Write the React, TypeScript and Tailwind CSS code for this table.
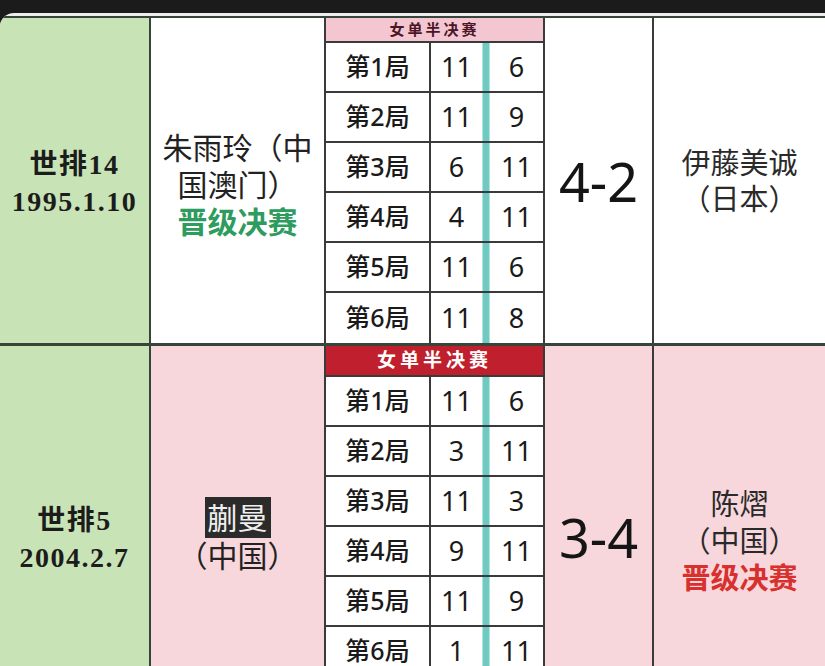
import React from 'react';

type Game = [string, string, string];

type Match = {
  rank: string;
  date: string;
  player: React.ReactNode;
  score: string;
  opponent: React.ReactNode;
  tone: 'white' | 'pink';
  header: 'light' | 'red';
  games: Game[];
};

const sans = 'font-["Noto_Sans","Noto_Sans_CJK_SC",sans-serif]';

const matches: Match[] = [
  {
    rank: '世排14',
    date: '1995.1.10',
    tone: 'white',
    header: 'light',
    score: '4-2',
    player: (
      <div className="w-[150px] pt-[8px] text-center text-[30px] leading-[37px] text-[#222]">
        朱雨玲（中国澳门）
        <div className="font-bold text-[#2f9c5f]">晋级决赛</div>
      </div>
    ),
    opponent: (
      <div className="text-center text-[29px] leading-[36px] text-[#2a2a2a]">
        <div>伊藤美诚</div>
        <div>（日本）</div>
      </div>
    ),
    games: [
      ['第1局', '11', '6'],
      ['第2局', '11', '9'],
      ['第3局', '6', '11'],
      ['第4局', '4', '11'],
      ['第5局', '11', '6'],
      ['第6局', '11', '8'],
    ],
  },
  {
    rank: '世排5',
    date: '2004.2.7',
    tone: 'pink',
    header: 'red',
    score: '3-4',
    player: (
      <div className="text-center text-[30px] leading-[38px] text-[#222]">
        <div>
          <span className="bg-[#2b2b2b] px-[3px] text-[#eeeeee]">蒯曼</span>
        </div>
        <div>（中国）</div>
      </div>
    ),
    opponent: (
      <div className="pt-[8px] text-center text-[29px] leading-[37px] text-[#2a2a2a]">
        <div>陈熠</div>
        <div>（中国）</div>
        <div className="font-bold text-[#d8302d]">晋级决赛</div>
      </div>
    ),
    games: [
      ['第1局', '11', '6'],
      ['第2局', '3', '11'],
      ['第3局', '11', '3'],
      ['第4局', '9', '11'],
      ['第5局', '11', '9'],
      ['第6局', '1', '11'],
      ['第7局', '8', '11'],
    ],
  },
];

function ScoreTable({ m }: { m: Match }) {
  return (
    <div className="flex w-[217px] shrink-0 flex-col bg-white">
      {m.header === 'light' ? (
        <div className="flex h-[25px] items-center justify-center border-b-2 border-[#3a3a3a] bg-[#f3c6d1] text-[15px] font-bold tracking-[3px] text-[#4a1526]">
          女单半决赛
        </div>
      ) : (
        <div className="flex h-[31px] items-center justify-center border-b-2 border-[#3a3a3a] bg-[#c01f2e] text-[19px] font-bold tracking-[4px] text-white">
          女单半决赛
        </div>
      )}
      {m.games.map((g, i) => (
        <div
          key={i}
          className={
            i === m.games.length - 1
              ? 'flex h-[50px] shrink-0'
              : 'flex h-[50px] shrink-0 border-b-2 border-[#3a3a3a]'
          }
        >
          <div className="flex w-[105px] items-center justify-center border-r-2 border-[#3a3a3a] text-[25px] font-medium text-[#1a1a1a]">
            {g[0]}
          </div>
          <div className="flex w-[51px] items-center justify-center text-[27px] text-[#1a1a1a]">
            {g[1]}
          </div>
          <div className="w-[8px] border-x border-[#b5e4de] bg-[#6fcac1]" />
          <div className="flex w-[53px] items-center justify-center text-[27px] text-[#1a1a1a]">
            {g[2]}
          </div>
        </div>
      ))}
    </div>
  );
}

function MatchRow({ m }: { m: Match }) {
  const tone = m.tone === 'pink' ? 'bg-[#f7d6dc]' : 'bg-white';
  return (
    <div className="flex border-b-[3px] border-[#36443a]">
      <div className="flex w-[151px] shrink-0 items-center justify-center border-r-2 border-[#36443a] bg-[#c8e3b5]">
        <div className='pt-[4px] text-center font-["Liberation_Serif","Noto_Sans_CJK_SC",serif] text-[28px] font-bold leading-[37px] tracking-[1.5px] text-[#1c1c1c]'>
          <div>{m.rank}</div>
          <div>{m.date}</div>
        </div>
      </div>
      <div className={`flex w-[175px] shrink-0 items-center justify-center border-r-2 border-[#3a3a3a] ${tone}`}>
        {m.player}
      </div>
      <ScoreTable m={m} />
      <div className={`flex w-[111px] shrink-0 items-center justify-center border-x-2 border-[#3a3a3a] ${tone}`}>
        <span className="text-[54px] leading-none text-[#151515]">{m.score}</span>
      </div>
      <div className={`flex flex-1 items-center justify-center ${tone}`}>{m.opponent}</div>
    </div>
  );
}

export default function App() {
  return (
    <div className={`h-[666px] w-[825px] overflow-hidden bg-[#1b1b1b] pt-[13px] ${sans}`}>
      <div className="overflow-hidden rounded-tl-[14px] bg-[#eeeeee] pt-[3px]">
        <div className="border-t-2 border-[#36443a]">
          {matches.map((m, i) => (
            <MatchRow key={i} m={m} />
          ))}
        </div>
      </div>
    </div>
  );
}
